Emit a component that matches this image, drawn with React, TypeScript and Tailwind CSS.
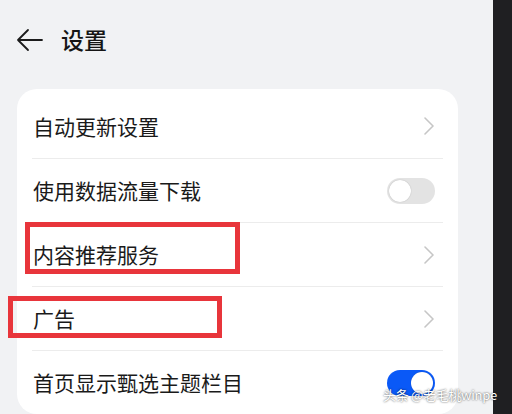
const font = { fontFamily: '"Noto Sans CJK SC", "Noto Sans", sans-serif' };

type Row = { label: string; kind: 'link' | 'off' | 'on' };

const rows: Row[] = [
  { label: '自动更新设置', kind: 'link' },
  { label: '使用数据流量下载', kind: 'off' },
  { label: '内容推荐服务', kind: 'link' },
  { label: '广告', kind: 'link' },
  { label: '首页显示甄选主题栏目', kind: 'on' },
];

const Toggle = ({ on }: { on: boolean }) => (
  <div className={`w-[48px] h-[26px] rounded-full flex items-center px-[2px] ${on ? 'bg-[#0a59f7] justify-end' : 'bg-[#e3e3e3] justify-start'}`}>
    <div className="w-[22px] h-[22px] rounded-full bg-white shadow-[0_0_1px_rgba(0,0,0,0.3)]" />
  </div>
);

const Chevron = () => (
  <svg width="12" height="18" viewBox="0 0 12 18" fill="none" stroke="#c6c6c6" strokeWidth="1.6" strokeLinecap="round" strokeLinejoin="round">
    <path d="M2 1l8 8-8 8" />
  </svg>
);

export default function App() {
  return (
    <div className="relative w-[512px] h-[414px] overflow-hidden flex bg-[#f1f2f4]" style={font}>
      <div className="w-[493px] flex flex-col">
        <div className="h-[80px] flex items-center pl-[16px] pt-[2px]">
          <svg width="28" height="24" viewBox="0 0 28 24" fill="none" stroke="#1b1b1b" strokeWidth="1.8" strokeLinecap="round" strokeLinejoin="round">
            <path d="M26 12H2M12 2L2 12l10 10" />
          </svg>
          <span className="ml-[17px] text-[23px] font-medium text-[#151515] leading-none">设置</span>
        </div>
        <div className="mt-[12px] ml-[17px] w-[441px] bg-white rounded-[20px] pt-[5px] px-[15px] flex flex-col">
          {rows.map((r, i) => (
            <div key={r.label} className={`h-[64px] flex items-center justify-between pl-[1px] pr-[8px] ${i > 0 ? 'border-t border-[#ececec]' : ''}`}>
              <span className="text-[21px] text-[#1a1a1a] leading-none">{r.label}</span>
              {r.kind === 'link' && <Chevron />}
              {r.kind === 'off' && <Toggle on={false} />}
              {r.kind === 'on' && <Toggle on={true} />}
            </div>
          ))}
        </div>
      </div>
      <div className="flex-1 bg-[#1f1f22]" />
      <div className="absolute left-[25px] top-[222px] w-[215px] h-[52px] border-[5px] border-[#e8353b]" />
      <div className="absolute left-[8px] top-[296px] w-[214px] h-[42px] border-[5px] border-[#e8353b]" />
      <div className="absolute left-[383px] top-[388px] text-[13px] tracking-[-0.3px] text-white leading-none [text-shadow:0_0_2px_rgba(0,0,0,0.8)]">头条 @老毛桃winpe</div>
    </div>
  );
}
